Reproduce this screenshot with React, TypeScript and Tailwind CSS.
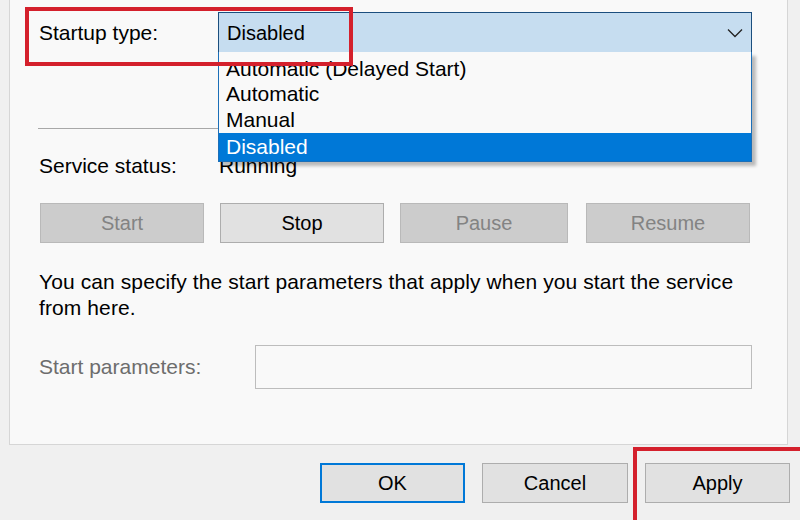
export default function App() {
  const font = { fontFamily: '"Liberation Sans", Arial, sans-serif' };

  return (
    <div
      className="relative h-[520px] w-[800px] overflow-hidden bg-[#f0f0f0] text-[21px] text-black"
      style={font}
    >
      {/* tab page */}
      <div className="ml-[9px] flex h-[445px] w-[779px] flex-col border-x border-b border-[#d6d6d6] bg-[#f9f9f9] pl-[29px]">
        {/* startup type */}
        <div className="mt-[12px] flex h-[41px] items-center">
          <div className="w-[179px] leading-[26px]">Startup type:</div>
          <div className="relative z-10 flex h-[41px] w-[534px] items-center border border-[#1b4e7e] bg-[#c6ddf0] pl-[8px]">
            <span className="text-[20px] leading-[26px]">Disabled</span>
            <svg
              className="absolute right-[8px] top-[15px]"
              width="16"
              height="10"
              viewBox="0 0 16 10"
              fill="none"
            >
              <path d="M1 1.5 L8 8.5 L15 1.5" stroke="#222" strokeWidth="1.3" />
            </svg>
            <div className="absolute left-[-1px] top-full w-[534px] border-x border-b border-[#1c6fb8] bg-[#f9f9f9] shadow-[4px_4px_3px_rgba(0,0,0,0.25)]">
              <div className="h-[29px] pl-[7px] pt-[4px] leading-[26px]">Automatic (Delayed Start)</div>
              <div className="h-[26px] pl-[7px] leading-[26px]">Automatic</div>
              <div className="h-[26px] pl-[7px] leading-[26px]">Manual</div>
              <div className="h-[28px] bg-[#0078d7] pl-[7px] leading-[28px] text-white">Disabled</div>
            </div>
          </div>
        </div>

        <div className="ml-[-1px] mt-[75px] h-px w-[713px] bg-[#a8a8a8]" />

        {/* service status */}
        <div className="mt-[24px] flex h-[26px] items-center">
          <div className="w-[180px] leading-[26px]">Service status:</div>
          <div className="leading-[26px]">Running</div>
        </div>

        <div className="ml-[1px] mt-[24px] flex text-[20px]">
          <button className="h-[40px] w-[164px] border border-[#b9b9b9] bg-[#cccccc] text-[#838383]">Start</button>
          <button className="ml-[16px] h-[40px] w-[164px] border border-[#adadad] bg-[#e1e1e1] text-black">Stop</button>
          <button className="ml-[16px] h-[40px] w-[168px] border border-[#b9b9b9] bg-[#cccccc] text-[#838383]">Pause</button>
          <button className="ml-[18px] h-[40px] w-[164px] border border-[#b9b9b9] bg-[#cccccc] text-[#838383]">Resume</button>
        </div>

        <p className="mt-[26px] w-[712px] leading-[26px] tracking-[0.1px]">
          You can specify the start parameters that apply when you start the service
          from here.
        </p>

        <div className="mt-[24px] flex items-center">
          <div className="w-[216px] leading-[26px] text-[#6d6d6d]">Start parameters:</div>
          <div className="h-[44px] w-[497px] border border-[#bdbdbd] bg-[#f9f9f9]" />
        </div>
      </div>

      {/* dialog buttons */}
      <div className="ml-[320px] mt-[18px] flex gap-[17px] text-[20px]">
        <button className="h-[40px] w-[145px] border-2 border-[#0078d7] bg-[#e1e1e1]">OK</button>
        <button className="h-[40px] w-[146px] border border-[#adadad] bg-[#e1e1e1]">Cancel</button>
        <button className="h-[40px] w-[145px] border border-[#adadad] bg-[#e1e1e1]">Apply</button>
      </div>

      {/* highlight annotations */}
      <div className="pointer-events-none absolute left-[25px] top-[7px] z-20 h-[59px] w-[328px] border-4 border-[#d4202c]" />
      <div className="pointer-events-none absolute left-[633px] top-[447px] z-20 h-[80px] w-[175px] border-4 border-[#d4202c]" />
    </div>
  );
}
